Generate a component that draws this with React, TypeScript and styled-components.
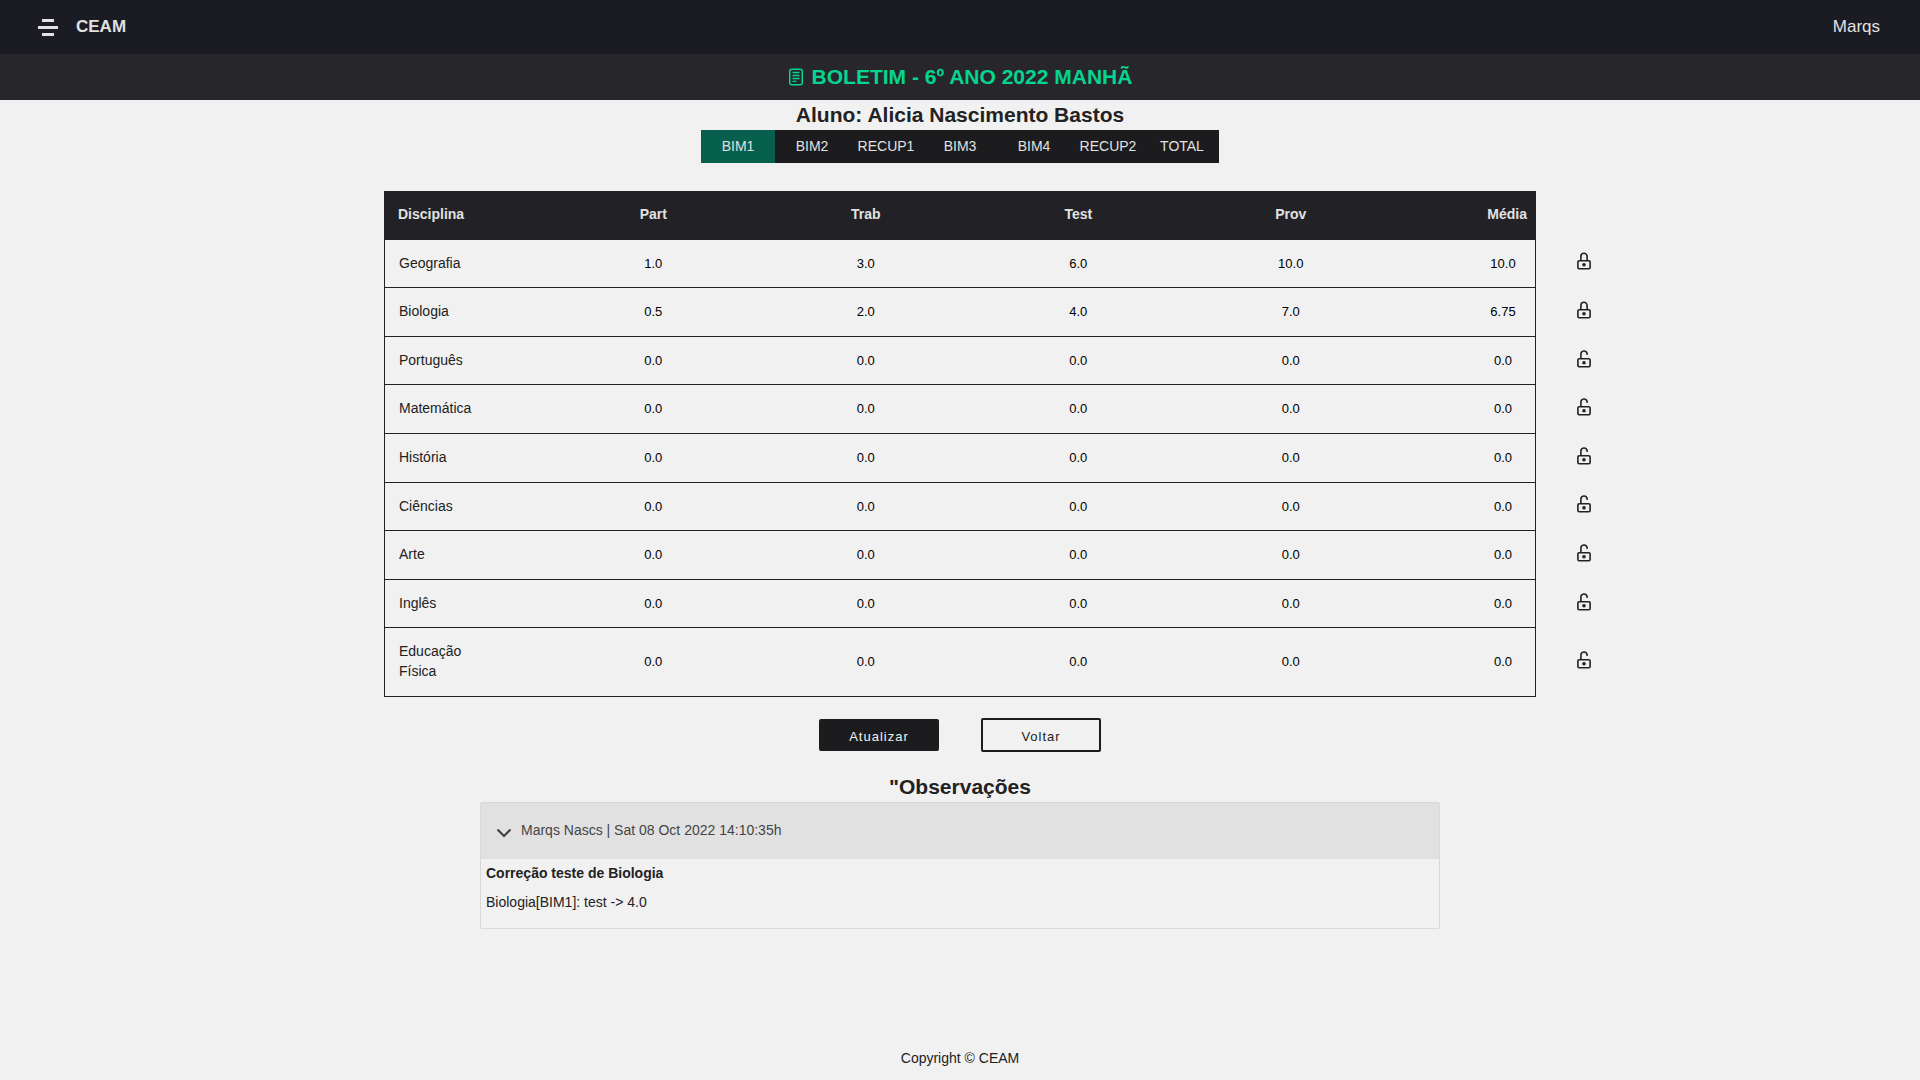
import React, { useState } from 'react';
import styled, { createGlobalStyle } from 'styled-components';

const GlobalStyle = createGlobalStyle`
  * { box-sizing: border-box; }
  body {
    margin: 0;
    background: #f1f1f1;
    color: #222222;
    font-family: "Liberation Sans", Arial, sans-serif;
    font-size: 14px;
    line-height: 1.4;
  }
`;

const Page = styled.div`
  display: flex;
  flex-direction: column;
  min-height: 100vh;
`;

const TopBar = styled.header`
  display: flex;
  align-items: center;
  justify-content: space-between;
  height: 54px;
  padding: 0 40px 0 38px;
  background: #1b1b23;
  color: #e1e1e1;
  font-size: 17px;
`;

const Brand = styled.div`
  display: flex;
  align-items: center;
  gap: 18px;
  font-weight: bold;
`;

const MenuButton = styled.button`
  display: flex;
  padding: 2px 0 0;
  border: 0;
  background: none;
  color: inherit;
  cursor: pointer;
`;

const UserLink = styled.a`
  color: inherit;
  text-decoration: none;
`;

const TitleBar = styled.div`
  display: flex;
  align-items: center;
  justify-content: center;
  gap: 8px;
  height: 46px;
  background: #27262b;
  color: #04d58f;
`;

const Title = styled.h1`
  margin: 0;
  font-size: 21px;
`;

const Main = styled.main`
  display: flex;
  flex: 1;
  flex-direction: column;
`;

const Heading = styled.h2`
  margin: 0;
  font-size: 21px;
  line-height: 30px;
  text-align: center;
`;

const Tabs = styled.nav`
  display: flex;
  align-self: center;
  background: #1c1c1e;
`;

const Tab = styled.button<{ $active: boolean }>`
  width: 74px;
  height: 33px;
  padding: 0;
  border: 0;
  background: ${(p) => (p.$active ? '#075f4d' : 'transparent')};
  color: #e1e1e1;
  font: inherit;
  cursor: pointer;
`;

const Grades = styled.table`
  width: 65%;
  margin: 28px 0 0 20%;
  border-collapse: separate;
  border-spacing: 0;
  table-layout: fixed;
`;

const SubjectCol = styled.col`
  width: 163px;
`;
const AverageCol = styled.col`
  width: 139px;
`;
const LockCol = styled.col`
  width: 96px;
`;

const HeadCell = styled.th<{ $align?: string }>`
  padding: 14px ${(p) => (p.$align === 'right' ? 9 : 14)}px 15px 14px;
  background: #222126;
  color: #e1e1e1;
  text-align: ${(p) => p.$align ?? 'center'};
`;

const EmptyCell = styled.td`
  padding: 0;
`;

const SubjectCell = styled.th`
  padding: 14px 64px 14px 14px;
  border-bottom: 1px solid #222126;
  border-left: 1px solid #222126;
  font-weight: normal;
  text-align: left;
`;

const GradeCell = styled.td<{ $last?: boolean }>`
  padding: 0;
  border-bottom: 1px solid #222126;
  border-right: ${(p) => (p.$last ? '1px solid #222126' : '0')};
  text-align: ${(p) => (p.$last ? 'right' : 'center')};
`;

const GradeInput = styled.input`
  width: 64px;
  padding: 0;
  border: 0;
  background: none;
  color: #000000;
  font-family: inherit;
  font-size: 13px;
  text-align: center;
`;

const LockCell = styled.td`
  padding: 0 0 6px;
  text-align: center;
`;

const LockButton = styled.button`
  display: inline-flex;
  padding: 0;
  border: 0;
  background: none;
  color: #222222;
  vertical-align: middle;
  cursor: pointer;
`;

const Actions = styled.div`
  display: flex;
  align-items: center;
  justify-content: center;
  gap: 42px;
  margin-top: 21px;
`;

const ActionButton = styled.button<{ $outline?: boolean }>`
  width: 120px;
  height: ${(p) => (p.$outline ? 34 : 32)}px;
  padding: 3px 0 0;
  border: ${(p) => (p.$outline ? '2px solid #1c1c1e' : '0')};
  border-radius: 2px;
  background: ${(p) => (p.$outline ? 'transparent' : '#1c1c1e')};
  color: ${(p) => (p.$outline ? '#222222' : '#f1f1f1')};
  font-family: inherit;
  font-size: 13px;
  letter-spacing: 1px;
  cursor: pointer;
`;

const Notes = styled.section`
  width: 50%;
  margin: 20px auto 0;
`;

const Note = styled.article`
  border: 1px solid #d8d8d8;
  border-radius: 2px;
`;

const NoteToggle = styled.button`
  display: flex;
  align-items: center;
  gap: 9px;
  width: 100%;
  height: 56px;
  padding: 0 15px;
  border: 0;
  background: #e1e1e1;
  color: #444444;
  font: inherit;
  text-align: left;
  cursor: pointer;
`;

const Chevron = styled.svg`
  margin-top: 4px;
`;

const NoteBody = styled.div`
  padding: 5px 5px 15px;
`;

const NoteTitle = styled.h3`
  margin: 0 0 10px;
  font-size: 14px;
`;

const NoteText = styled.p`
  margin: 0;
`;

const Footer = styled.footer`
  padding: 12px 12px 11px;
  text-align: center;
`;

const periods = ['BIM1', 'BIM2', 'RECUP1', 'BIM3', 'BIM4', 'RECUP2', 'TOTAL'];
const columns = ['Part', 'Trab', 'Test', 'Prov', 'Média'];

const empty = ['0.0', '0.0', '0.0', '0.0', '0.0'];
const subjects = [
  { name: 'Geografia', grades: ['1.0', '3.0', '6.0', '10.0', '10.0'], locked: true },
  { name: 'Biologia', grades: ['0.5', '2.0', '4.0', '7.0', '6.75'], locked: true },
  { name: 'Português', grades: empty, locked: false },
  { name: 'Matemática', grades: empty, locked: false },
  { name: 'História', grades: empty, locked: false },
  { name: 'Ciências', grades: empty, locked: false },
  { name: 'Arte', grades: empty, locked: false },
  { name: 'Inglês', grades: empty, locked: false },
  { name: 'Educação Física', grades: empty, locked: false },
];

function LockIcon({ locked }: { locked: boolean }) {
  return (
    <svg width="16" height="18" viewBox="0 0 16 18" fill="none" stroke="currentColor" strokeWidth="1.6" aria-hidden="true">
      <rect x="1.9" y="8.8" width="12.2" height="7.900" rx="1.2" />
      <path d={locked ? 'M4.900 8.800V4.400a3.100 3.100 0 0 1 6.200 0V8.800' : 'M4.900 8.800V4a3.100 3.100 0 0 1 6.100-.7l.3 1.500'} />
      <circle cx="8" cy="12.700" r="1.800" fill="currentColor" stroke="none" />
    </svg>
  );
}

export default function App() {
  const [period, setPeriod] = useState('BIM1');
  const [open, setOpen] = useState(true);

  return (
    <Page>
      <GlobalStyle />
      <TopBar>
        <Brand>
          <MenuButton aria-label="Menu">
            <svg width="20" height="17" viewBox="0 0 20 17" fill="currentColor" aria-hidden="true">
              <path d="M4 0h12v3H4zM0 7h20v3H0zM4 14h12v3H4z" />
            </svg>
          </MenuButton>
          <span>CEAM</span>
        </Brand>
        <UserLink href="#perfil">Marqs</UserLink>
      </TopBar>
      <TitleBar>
        <svg width="16" height="18" viewBox="0 0 16 18" fill="none" stroke="currentColor" strokeWidth="1.5" aria-hidden="true">
          <rect x="1.75" y="1.25" width="12.5" height="15.500" rx="2" />
          <path d="M4.500 4.500h7M4.500 7.500h7M4.500 10.500h7M4.500 13.300h4" strokeWidth="1.300" />
        </svg>
        <Title>BOLETIM - 6º ANO 2022 MANHÃ</Title>
      </TitleBar>
      <Main>
        <Heading>Aluno: Alicia Nascimento Bastos</Heading>
        <Tabs>
          {periods.map((p) => (
            <Tab key={p} $active={p === period} onClick={() => setPeriod(p)}>
              {p}
            </Tab>
          ))}
        </Tabs>
        <Grades>
          <colgroup>
            <SubjectCol />
            <col span={4} />
            <AverageCol />
            <LockCol />
          </colgroup>
          <thead>
            <tr>
              <HeadCell $align="left">Disciplina</HeadCell>
              {columns.map((c) => (
                <HeadCell key={c} $align={c === 'Média' ? 'right' : 'center'}>{c}</HeadCell>
              ))}
              <EmptyCell />
            </tr>
          </thead>
          <tbody>
            {subjects.map((s) => (
              <tr key={s.name}>
                <SubjectCell scope="row">{s.name}</SubjectCell>
                {s.grades.map((g, i) => (
                  <GradeCell key={columns[i]} $last={i === 4}>
                    <GradeInput aria-label={`${s.name} ${columns[i]}`} defaultValue={g} />
                  </GradeCell>
                ))}
                <LockCell>
                  <LockButton aria-label={s.locked ? `Desbloquear ${s.name}` : `Bloquear ${s.name}`}>
                    <LockIcon locked={s.locked} />
                  </LockButton>
                </LockCell>
              </tr>
            ))}
          </tbody>
        </Grades>
        <Actions>
          <ActionButton>Atualizar</ActionButton>
          <ActionButton $outline>Voltar</ActionButton>
        </Actions>
        <Notes>
          <Heading>"Observações</Heading>
          <Note>
            <NoteToggle aria-expanded={open} onClick={() => setOpen(!open)}>
              <Chevron width="16" height="10" viewBox="0 0 16 10" fill="none" stroke="currentColor" strokeWidth="2.2" aria-hidden="true">
                <path d="M1.5 1.5 8 8l6.5-6.5" />
              </Chevron>
              Marqs Nascs | Sat 08 Oct 2022 14:10:35h
            </NoteToggle>
            {open && (
              <NoteBody>
                <NoteTitle>Correção teste de Biologia</NoteTitle>
                <NoteText>Biologia[BIM1]: test -&gt; 4.0</NoteText>
              </NoteBody>
            )}
          </Note>
        </Notes>
      </Main>
      <Footer>Copyright © CEAM</Footer>
    </Page>
  );
}
